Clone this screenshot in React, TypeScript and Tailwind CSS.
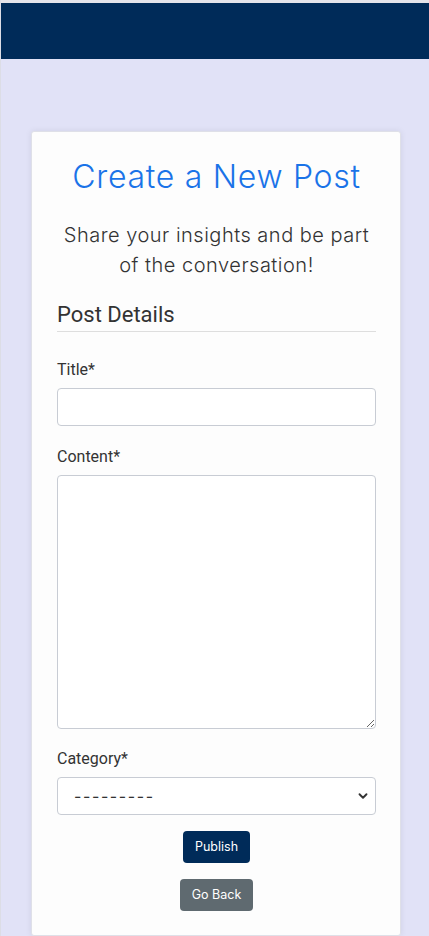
import { ChevronDown } from 'lucide-react';

const poppins = "font-['Inter',sans-serif]";
const roboto = "font-['Roboto','Liberation_Sans',sans-serif]";

export default function App() {
  return (
    <div className="h-[936px] overflow-hidden bg-[#e1e2f7] border-l border-[#dcdde6] pt-[3px] [box-shadow:inset_0_3px_0_#e4e4ea]">
      {/* Navbar */}
      <nav className="h-[56px] bg-[#002b59]" />

      <main className="pl-[30px] pr-[28px] pt-[72px]">
        <section className="h-[805px] bg-[#fdfdfd] border border-[#dfe0e8] rounded-[3px] shadow-[0_0_6px_rgba(0,0,0,0.08)] pl-[25px] pr-[24px] pt-[25px]">
          {/* Header */}
          <h1 className={`${poppins} text-center text-[#1a73e8] text-[32px] font-light leading-[40px] tracking-[0.7px]`}>
            Create a New Post
          </h1>
          <p className={`${poppins} text-center text-[#333] text-[20px] font-light leading-[30px] tracking-[0.5px] mt-[23px]`}>
            Share your insights and be part of the conversation!
          </p>

          {/* Post details */}
          <h2 className={`${roboto} text-[22px] text-[#333] leading-[28px] mt-[21px] pb-[2px] border-b border-[#dedede]`}>
            Post Details
          </h2>

          <form className={`${roboto} mt-[26px] flex flex-col`}>
            <label className="text-[16px] text-[#333] leading-[24px]">Title*</label>
            <input
              type="text"
              className="mt-[6px] h-[38px] w-full rounded-[4px] border border-[#c8ccd4] bg-white px-3"
            />

            <label className="mt-[19px] text-[16px] text-[#333] leading-[24px]">Content*</label>
            <textarea className="mt-[6px] h-[254px] w-full rounded-[4px] border border-[#c8ccd4] bg-white px-3 resize-y" />

            <label className="mt-[18px] text-[16px] text-[#333] leading-[24px]">Category*</label>
            <div className="relative mt-[6px] h-[38px] w-full rounded-[4px] border border-[#c8ccd4] bg-white">
              <select className={`${poppins} appearance-none h-full w-full bg-transparent pl-[16px] pr-8 text-[16px] tracking-[1.6px] text-[#333] outline-none`}>
                <option>---------</option>
              </select>
              <ChevronDown
                size={14}
                strokeWidth={3.2}
                className="pointer-events-none absolute right-[5px] top-[11px] text-[#333]"
              />
            </div>

            <div className="mt-[16px] flex flex-col items-center gap-[16px]">
              <button type="button" className={`${poppins} h-[32px] px-[12px] rounded-[4px] bg-[#002b59] text-white text-[12.5px]`}>
                Publish
              </button>
              <button type="button" className={`${poppins} h-[32px] px-[12px] rounded-[4px] bg-[#5f6a70] text-white text-[12.5px]`}>
                Go Back
              </button>
            </div>
          </form>
        </section>
      </main>
    </div>
  );
}
